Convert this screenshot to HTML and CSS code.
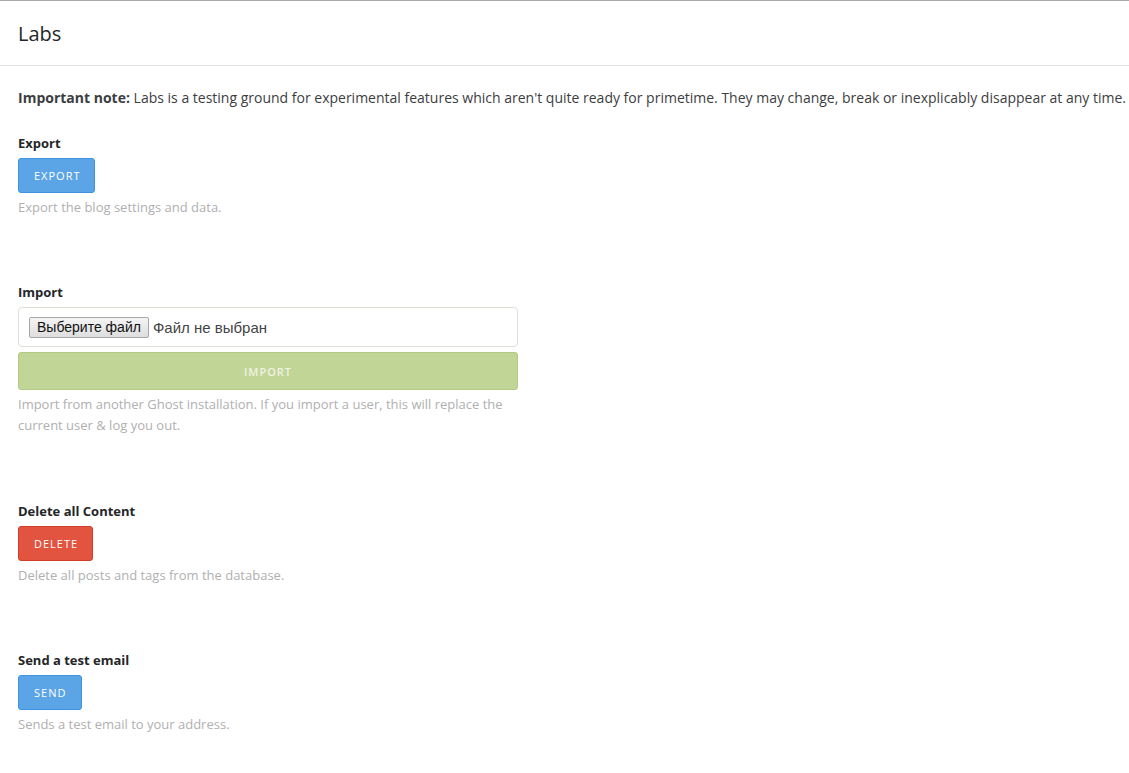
FILE: index.html
```html
<!DOCTYPE html>
<html>
<head>
<meta charset="utf-8">
<link rel="stylesheet" href="styles.css">
</head>
<body>
<header class="page-header">
  <h2 class="page-title">Labs</h2>
</header>
<section class="content">
  <p class="note"><strong>Important note:</strong> Labs is a testing ground for experimental features which aren't quite ready for primetime. They may change, break or inexplicably disappear at any time.</p>

  <div class="group">
    <label class="label">Export</label>
    <button class="btn btn-blue btn-export">Export</button>
    <p class="desc">Export the blog settings and data.</p>
  </div>

  <div class="group narrow">
    <label class="label">Import</label>
    <div class="file-box">
      <span class="file-btn">Выберите файл</span>
      <span class="file-name">Файл не выбран</span>
    </div>
    <button class="btn btn-green btn-block">Import</button>
    <p class="desc">Import from another Ghost installation. If you import a user, this will replace the current user &amp; log you out.</p>
  </div>

  <div class="group">
    <label class="label">Delete all Content</label>
    <button class="btn btn-red btn-delete">Delete</button>
    <p class="desc">Delete all posts and tags from the database.</p>
  </div>

  <div class="group">
    <label class="label">Send a test email</label>
    <button class="btn btn-blue btn-send">Send</button>
    <p class="desc">Sends a test email to your address.</p>
  </div>
</section>
</body>
</html>
```

FILE: styles.css
```css
html, body {
  margin: 0;
  padding: 0;
  background: #fff;
}
body {
  font-family: "Open Sans", sans-serif;
  color: #242628;
  border-top: 1px solid #a9a9a9;
}
.page-header {
  height: 64px;
  border-bottom: 1px solid #e1e1e1;
  display: flex;
  align-items: center;
  padding: 0 18px;
}
.page-title {
  margin: 0;
  font-size: 20px;
  font-weight: 400;
  line-height: 1;
  color: #242628;
  position: relative;
  top: 1px;
}
.content {
  padding: 22px 18px 0;
}
.note {
  margin: 0 0 25px;
  font-size: 14px;
  line-height: 20px;
  color: #3c3d3f;
  white-space: nowrap;
}
.note strong {
  color: #3c3d3f;
}
.group {
  display: flex;
  flex-direction: column;
  align-items: flex-start;
  margin-bottom: 64px;
}
.group.narrow {
  width: 500px;
  align-items: stretch;
  margin-bottom: 65px;
}
.label {
  font-size: 13px;
  font-weight: 700;
  line-height: 20px;
  color: #242628;
  margin-bottom: 5px;
}
.btn {
  font-family: "Open Sans", sans-serif;
  font-size: 11px;
  letter-spacing: 1px;
  text-transform: uppercase;
  color: #fff;
  border-radius: 3px;
  height: 35px;
  padding: 0 15px;
  border: 1px solid transparent;
  cursor: pointer;
}
.btn-blue {
  background: #5ba4e5;
  border-color: #3d93e1;
}
.btn-red {
  background: #e25440;
  border-color: #d23d29;
}
.btn-green {
  background: #c1d596;
  border-color: #b3ca85;
  color: #eef3e2;
  font-weight: 600;
}
.btn-export { width: 77px; }
.btn-delete { width: 75px; }
.btn-send { width: 64px; }
.btn-block {
  width: 100%;
  height: 38px;
  margin-top: 5px;
}
.desc {
  margin: 4px 0 0;
  font-size: 13px;
  line-height: 21px;
  color: #b0b0b0;
}
.file-box {
  height: 38px;
  border: 1px solid #e0dfd7;
  border-radius: 4px;
  display: flex;
  align-items: center;
  padding: 0 10px;
  font-family: "Liberation Sans", Arial, sans-serif;
  font-size: 15px;
}
.file-btn {
  display: inline-flex;
  align-items: center;
  height: 19px;
  padding: 0 7px;
  border: 1px solid #a6a6a6;
  border-radius: 2px;
  background: linear-gradient(#f4f4f4, #dedede);
  color: #111;
  font-size: 14px;
}
.file-name {
  margin-left: 4px;
  color: #444;
}
```
